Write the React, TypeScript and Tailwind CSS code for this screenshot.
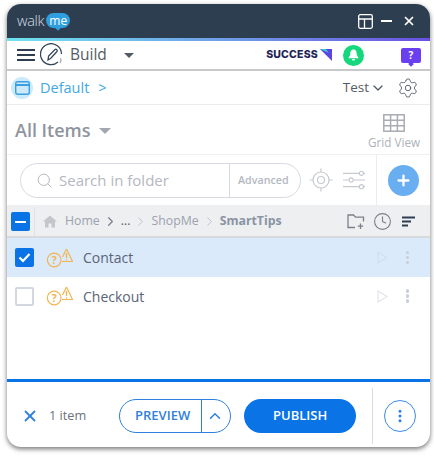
import React from 'react';
import { ChevronDown, ChevronRight, ChevronUp, Clock, MoreVertical, Plus, Search, Settings, X } from 'lucide-react';

const font = { fontFamily: '"Open Sans", sans-serif' };

const Crumb = ({ label, bold }: { label: string; bold?: boolean }) => (
    <span className={bold ? 'font-bold text-[#8a94a3]' : 'text-[#9aa2ae]'}>{label}</span>
);

const Sep = ({ dark }: { dark?: boolean }) => (
    <ChevronRight size={15} strokeWidth={dark ? 2 : 1.3} className={`mx-[3px] ${dark ? 'text-[#7d838d]' : 'text-[#b4b9c1]'}`} />
);

const StatusIcons = () => (
    <svg width="28" height="20" viewBox="0 0 28 20" fill="none" stroke="#f0b552" strokeWidth="1.2">
        <path d="M20.5 1 L26.5 13.5 H16" strokeLinejoin="round" />
        <path d="M20.5 1 L16.5 9" />
        <path d="M20.5 5 V10 M20.5 11.2 V12.4" strokeWidth="1.4" />
        <circle cx="8.2" cy="12" r="6.8" />
        <text x="8.2" y="15.8" textAnchor="middle" fontSize="10.5" fontWeight="700" fill="#f0b552" stroke="none">?</text>
    </svg>
);

const Row = ({ label, checked }: { label: string; checked?: boolean }) => (
    <div className={`flex items-center pl-[8px] pr-[21px] ${checked ? 'h-[39px] bg-[#dbeafb]' : 'h-[38px] bg-white'}`}>
        {checked ? (
            <div className="flex h-[19px] w-[19px] items-center justify-center rounded-[2px] bg-[#0a73e6]">
                <svg width="13" height="11" viewBox="0 0 13 11" fill="none" stroke="white" strokeWidth="2.2">
                    <path d="M1.5 5.5 L5 9 L11.5 2" />
                </svg>
            </div>
        ) : (
            <div className="h-[19px] w-[19px] rounded-[2px] border-2 border-[#d3d7e0] bg-white" />
        )}
        <div className="ml-[12px] flex w-[37px]">
            <StatusIcons />
        </div>
        <span className="text-[14px] text-[#5a6476]">{label}</span>
        <svg className="ml-auto" width="11" height="13" viewBox="0 0 11 13" fill="none" stroke={checked ? '#d2dded' : '#e1e4ea'} strokeWidth="1.2">
            <path d="M1 1 L10 6.5 L1 12 Z" />
        </svg>
        <div className="ml-[18px] flex flex-col gap-[1.5px]">
            <span className="h-[3.5px] w-[3.5px] rounded-full bg-[#c9ced8]" />
            <span className="h-[3.5px] w-[3.5px] rounded-full bg-[#c9ced8]" />
            <span className="h-[3.5px] w-[3.5px] rounded-full bg-[#c9ced8]" />
        </div>
    </div>
);

export default function App() {
    return (
        <div className="h-[458px] w-[434px] bg-white pl-[7px] pr-[4px] pt-[4px]" style={font}>
            <div className="flex h-[443px] w-[423px] flex-col overflow-hidden rounded-[14px] bg-white shadow-[0_2px_5px_rgba(0,0,0,0.55)]">
                {/* Title bar */}
                <div className="flex h-[34px] shrink-0 items-center bg-[#2d3e50] pl-[10px] pr-[14px]">
                    <div className="flex items-center">
                        <span className="text-[14.5px] font-light leading-none tracking-[-0.3px] text-[#d5dee6]">walk</span>
                        <span className="relative -mt-[1px] ml-[2px] rounded-[8px] bg-[#2f9fe0] px-[3px] py-[1px] text-[12px] leading-[13px] text-white after:absolute after:-bottom-[2px] after:left-[10px] after:h-[4px] after:w-[4px] after:rotate-45 after:bg-[#2f9fe0]">me</span>
                    </div>
                    <svg className="ml-auto" width="15" height="15" viewBox="0 0 15 15" fill="none" stroke="white" strokeWidth="1.3">
                        <rect x="0.7" y="0.7" width="13.6" height="13.6" rx="1.5" />
                        <path d="M0.7 5 H14.3 M6.5 5 V14.3" />
                    </svg>
                    <span className="ml-[8px] h-[2px] w-[11px] bg-white" />
                    <X size={14} strokeWidth={3} className="ml-[10px] text-white" />
                </div>
                <div className="h-[3px] shrink-0 bg-gradient-to-r from-[#6fe3ee] via-[#6f9fe8] to-[#6a4fe0]" />

                {/* Build toolbar */}
                <div className="flex h-[30px] shrink-0 items-center border-b-2 border-[#c9c9c9] pl-[10px] pr-[9px]">
                    <div className="flex flex-col gap-[3px]">
                        <span className="h-[2px] w-[18px] bg-[#2d3e50]" />
                        <span className="h-[2px] w-[18px] bg-[#2d3e50]" />
                        <span className="h-[2px] w-[18px] bg-[#2d3e50]" />
                    </div>
                    <svg className="ml-[5px]" width="24" height="24" viewBox="0 0 24 24" fill="none" stroke="#34465a" strokeWidth="1.3">
                        <path d="M18 19 A10.5 10.5 0 1 1 21.5 11" />
                        <path d="M8 17 L8.6 13 L15 6.5 C16 5.6 18 7.3 17 8.5 L10.8 15.2 Z" />
                        <path d="M20.5 15 A5 5 0 0 1 20 20" stroke="#b0b5bd" />
                    </svg>
                    <span className="ml-[6px] text-[15.5px] leading-none text-[#555b66]">Build</span>
                    <span className="ml-[17px] h-0 w-0 border-x-[5.5px] border-t-[5.5px] border-x-transparent border-t-[#555b66]" />
                    <span className="ml-auto text-[10.5px] font-extrabold tracking-[0.2px] text-[#1e2458]" style={{ fontFamily: 'Inter, sans-serif' }}>SUCCESS</span>
                    <svg className="ml-[2px]" width="13" height="13" viewBox="0 0 13 13">
                        <path d="M0 0 H12 V12 Z" fill="#5a45e0" />
                        <path d="M0 0 H6 L9 4 Z" fill="#39c6d8" />
                    </svg>
                    <div className="ml-[10px] flex h-[21px] w-[21px] items-center justify-center rounded-full bg-[#15d77c]">
                        <svg width="11" height="12" viewBox="0 0 11 12" fill="white">
                            <path d="M5.5 0.5 C8 0.5 8.7 2.8 8.7 5 C8.7 7 10.5 8 10.5 9.3 H0.5 C0.5 8 2.3 7 2.3 5 C2.3 2.8 3 0.5 5.5 0.5 Z" />
                            <rect x="4" y="10" width="3" height="1.6" rx="0.8" />
                        </svg>
                    </div>
                    <div className="relative ml-[37px] flex h-[15px] w-[20px] items-center justify-center rounded-[2px] bg-[#6a3ff0] text-[10px] font-bold leading-none text-white after:absolute after:-bottom-[3px] after:left-[8px] after:h-[4px] after:w-[4px] after:rotate-45 after:bg-[#6a3ff0]">
                        ?
                    </div>
                </div>

                {/* Project row */}
                <div className="flex h-[34px] shrink-0 items-center border-b border-[#ececec] pl-[4px] pr-[11px]">
                    <div className="flex h-[22px] w-[22px] items-center justify-center rounded-full bg-[#cdeafa]">
                        <svg width="15" height="14" viewBox="0 0 15 14" fill="none" stroke="#3a9fe0" strokeWidth="1.4">
                            <rect x="0.7" y="0.7" width="13.6" height="12.6" rx="2" />
                            <path d="M0.7 4 H14.3" strokeWidth="2" />
                        </svg>
                    </div>
                    <span className="ml-[7px] text-[14.5px] text-[#3fa9e3]">Default</span>
                    <span className="ml-[9px] text-[14.5px] text-[#3fa9e3]">&gt;</span>
                    <span className="ml-auto text-[13.5px] text-[#555b66]">Test</span>
                    <ChevronDown size={16} strokeWidth={2} className="ml-[1px] text-[#555b66]" />
                    <Settings size={22} strokeWidth={1} className="ml-[11px] text-[#555b66]" />
                </div>

                {/* All items */}
                <div className="flex h-[50px] shrink-0 items-center justify-between border-b border-[#f0f0f0] pl-[8px] pr-[10px]">
                    <div className="flex items-center">
                        <span className="text-[18px] font-semibold leading-none text-[#8f959e]">All Items</span>
                        <span className="ml-[8px] mt-[3px] h-0 w-0 border-x-[6px] border-t-[6px] border-x-transparent border-t-[#a3a8b0]" />
                    </div>
                    <div className="mt-[3px] flex flex-col items-center">
                        <svg width="22" height="18" viewBox="0 0 22 18" fill="none" stroke="#a9acb3" strokeWidth="1.5">
                            <rect x="0.8" y="0.8" width="20.4" height="16.4" />
                            <path d="M0.8 6.2 H21.2 M0.8 11.8 H21.2 M7.6 0.8 V17.2 M14.4 0.8 V17.2" />
                        </svg>
                        <span className="mt-[3px] text-[11.7px] leading-[14px] text-[#aeb2b9]">Grid View</span>
                    </div>
                </div>

                {/* Search */}
                <div className="flex h-[50px] shrink-0 items-center pl-[13px]">
                    <div className="flex h-[35px] w-[281px] items-center rounded-full border border-[#d7dae0]">
                        <Search size={17} strokeWidth={1.4} className="ml-[15px] text-[#b4b8bf]" />
                        <span className="ml-[6px] text-[15px] text-[#b4b8bf]">Search in folder</span>
                        <span className="ml-auto flex h-full w-[71px] items-center border-l border-[#d7dae0] pl-[8px] text-[10.7px] font-semibold text-[#b4b8bf]">Advanced</span>
                    </div>
                    <svg className="ml-[8px]" width="24" height="24" viewBox="0 0 24 24" fill="none" stroke="#c6c9cf" strokeWidth="1.2">
                        <circle cx="12" cy="12" r="8" />
                        <circle cx="12" cy="12" r="3.5" />
                        <path d="M12 0.5 V4 M12 20 V23.5 M0.5 12 H4 M20 12 H23.5" />
                    </svg>
                    <svg className="ml-[10px]" width="22" height="22" viewBox="0 0 23 22" fill="none" stroke="#c6c9cf" strokeWidth="1.2">
                        <path d="M0 4 H17 M21.5 4 H23 M0 11 H6 M11 11 H23 M0 18 H17 M21.5 18 H23" />
                        <circle cx="19.3" cy="4" r="2.2" />
                        <circle cx="8.5" cy="11" r="2.2" />
                        <circle cx="19.3" cy="18" r="2.2" />
                    </svg>
                    <div className="ml-[11px] flex h-full flex-1 items-center justify-center border-l border-[#ececec] pr-[1px]">
                        <div className="flex h-[31px] w-[31px] items-center justify-center rounded-full bg-[#69aef0]">
                            <Plus size={17} strokeWidth={3.2} className="text-white" />
                        </div>
                    </div>
                </div>

                {/* Breadcrumb */}
                <div className="flex h-[33px] shrink-0 items-center border-b-2 border-[#d8dadd] bg-[#eeeff1] pr-[15px] pt-[2px] text-[12.3px]">
                    <div className="flex h-full w-[28px] items-center justify-center border-r border-[#e0e2e5]">
                        <div className="flex h-[19px] w-[19px] items-center justify-center rounded-[2px] bg-[#0a73e6]">
                            <span className="h-[2px] w-[11px] bg-white" />
                        </div>
                    </div>
                    <svg className="ml-[8px]" width="14" height="13" viewBox="0 0 14 13" fill="#c3c6cb">
                        <path d="M7 0.5 L14 6.5 H12 V12.5 H8.5 V8.5 H5.5 V12.5 H2 V6.5 H0 Z" />
                    </svg>
                    <span className="ml-[8px] flex items-center">
                        <Crumb label="Home" />
                        <Sep dark />
                        <span className="text-[#555b66]">...</span>
                        <Sep />
                        <Crumb label="ShopMe" />
                        <Sep />
                        <Crumb label="SmartTips" bold />
                    </span>
                    <svg className="ml-auto" width="18" height="17" viewBox="0 0 18 17" fill="none" stroke="#7a808a" strokeWidth="1.3">
                        <path d="M8 14.5 H1 V2 H6.5 L8.5 4.2 H16.5 V8.5" />
                        <path d="M13.5 10.5 V16 M10.8 13.2 H16.2" />
                    </svg>
                    <Clock size={19} strokeWidth={1.4} className="ml-[8px] text-[#7a808a]" />
                    <svg className="ml-[10px]" width="13" height="11" viewBox="0 0 13 11" fill="#2d3e50">
                        <rect x="0" y="0.5" width="13" height="2" />
                        <rect x="0" y="4.5" width="9" height="2" />
                        <rect x="0" y="8.5" width="6" height="2" />
                    </svg>
                </div>

                {/* Items */}
                <div className="min-h-0 flex-1">
                    <Row label="Contact" checked />
                    <Row label="Checkout" />
                </div>

                {/* Footer */}
                <div className="flex h-[68px] shrink-0 items-center border-t-[3px] border-[#0a73e6] pl-[14px] pt-[2px]">
                    <X size={18} strokeWidth={2.4} className="text-[#2f80dd]" />
                    <span className="ml-[10px] text-[12.7px] text-[#6b7280]">1 item</span>
                    <div className="ml-[33px] flex h-[34px] w-[112px] items-center rounded-full border border-[#2f80dd]">
                        <span className="flex-1 pl-[4px] text-center text-[13px] font-semibold text-[#2f80dd]">PREVIEW</span>
                        <div className="flex h-full w-[29px] items-center justify-center border-l border-[#2f80dd]">
                            <ChevronUp size={18} strokeWidth={2} className="mr-[2px] text-[#2f80dd]" />
                        </div>
                    </div>
                    <div className="ml-[13px] flex h-[34px] w-[112px] items-center justify-center rounded-full bg-[#0a73e6] text-[13px] font-semibold text-white">
                        PUBLISH
                    </div>
                    <div className="ml-[16px] h-[56px] border-l border-[#d9dbde]" />
                    <div className="ml-[11px] flex h-[32px] w-[32px] items-center justify-center rounded-full border border-[#3a8ae6]">
                        <MoreVertical size={16} strokeWidth={2.6} className="text-[#2f80dd]" />
                    </div>
                </div>
            </div>
        </div>
    );
}
